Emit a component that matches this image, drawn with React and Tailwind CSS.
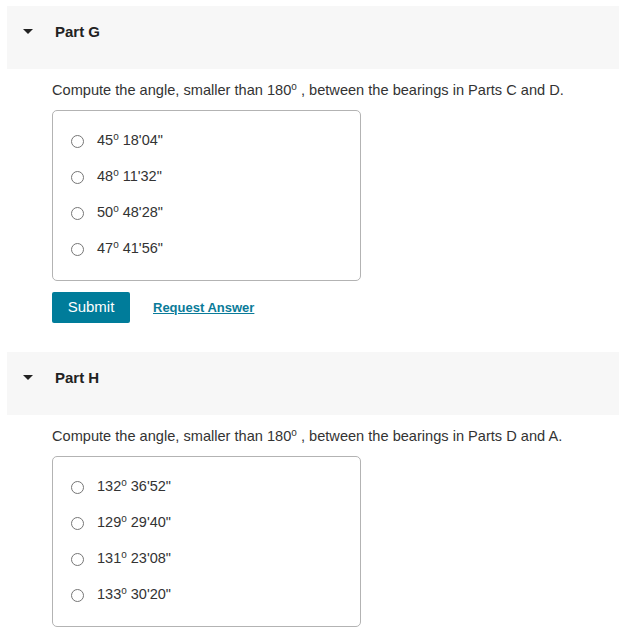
import React from "react";

function Header({ label }) {
  return (
    <div className="pl-[7px]">
      <div className="h-[63px] bg-[#f7f7f7] flex items-start pt-[16px] pl-[16px]">
        <svg width="10" height="6" viewBox="0 0 10 6" className="mt-[7px]">
          <polygon points="0,0 10,0 5,5" fill="#222" />
        </svg>
        <span className="ml-[22px] text-[15px] leading-[20px] font-bold text-[#222]">{label}</span>
      </div>
    </div>
  );
}

function Option({ deg, rest }) {
  return (
    <div className="h-[36px] flex items-center">
      <span className="w-[13px] h-[13px] rounded-full border border-[#767676] bg-white shrink-0" />
      <span className="ml-[13px] text-[14.5px] text-[#333]">
        {deg}
        <sup className="text-[10px]">o</sup> {rest}
      </span>
    </div>
  );
}

function Part({ label, parts, options, showButtons }) {
  return (
    <div>
      <Header label={label} />
      <div className="pl-[52px]">
        <p className="mt-[11px] text-[14.6px] leading-[20px] text-[#333]">
          Compute the angle, smaller than 180<sup className="text-[10px]">o</sup> , between the bearings in Parts {parts}.
        </p>
        <div className="mt-[10px] w-[309px] border border-[#b3b3b3] rounded-[5px] pt-[12px] pb-[13px] pl-[18px]">
          {options.map((o, i) => (
            <Option key={i} deg={o[0]} rest={o[1]} />
          ))}
        </div>
        {showButtons && (
          <div className="mt-[11px] flex items-center">
            <button className="w-[78px] h-[31px] bg-[#007c9a] rounded-[2px] text-white text-[15px]">Submit</button>
            <a className="ml-[23px] text-[13px] font-bold text-[#0a7b99] underline">Request Answer</a>
          </div>
        )}
      </div>
    </div>
  );
}

export default function App() {
  return (
    <div className="w-[619px] h-[633px] bg-white pt-[6px] overflow-hidden" style={{ fontFamily: '"Liberation Sans", Arial, sans-serif' }}>
      <Part
        label="Part G"
        parts="C and D"
        options={[["45", "18'04\""], ["48", "11'32\""], ["50", "48'28\""], ["47", "41'56\""]]}
        showButtons
      />
      <div className="h-[29px]" />
      <Part
        label="Part H"
        parts="D and A"
        options={[["132", "36'52\""], ["129", "29'40\""], ["131", "23'08\""], ["133", "30'20\""]]}
      />
    </div>
  );
}
